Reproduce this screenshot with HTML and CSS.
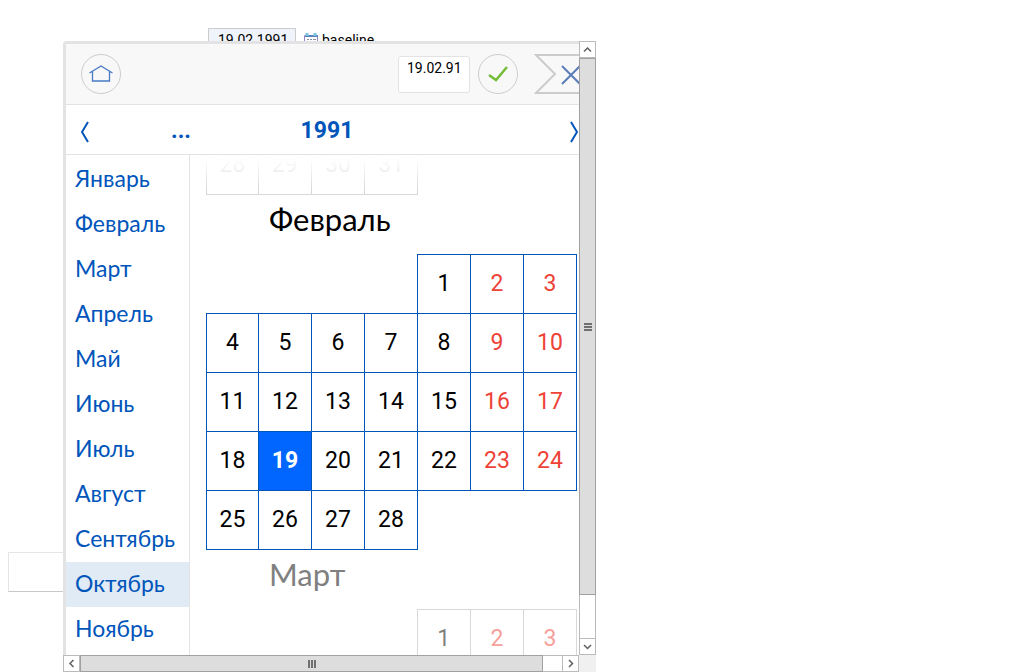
FILE: index.html
```html
<!DOCTYPE html>
<html lang="ru">
<head>
<meta charset="utf-8">
<title>Календарь</title>
<link rel="stylesheet" href="styles.css">
</head>
<body>
<main class="page">
  <div class="date-row">
    <input class="date-input" type="text" value="19.02.1991" aria-label="Дата" id="date">
    <svg class="date-icon" viewBox="0 0 14 14" aria-hidden="true"><path d="M.5 2.500h13v11H.5z" fill="#fff" stroke="#9a86cc"/><path d="M1 2h13v2H1z" fill="#5b83bd"/><path d="M3 0v3M11 0v3" stroke="#7cc4dd" stroke-width="3"/><path d="M3 6.500h2m1 0h2m1 0h3M3 9.500h2m1 0h2m1 0h3" stroke="#8b91a8"/></svg>
    <label for="date">baseline</label>
  </div>
  <input class="field" type="text" aria-label="Поле">
</main>

<div class="popup" role="dialog" aria-label="Выбор даты">
  <div class="picker">
    <header class="toolbar">
      <button class="round" type="button" aria-label="Сегодня"><svg width="24" height="18" viewBox="0 0 24 18"><path d="M.5 8 12 1l11.500 7M3.500 6.500v9.500h17V6.500" fill="none" stroke="#4779c4" stroke-width="1.300"/></svg></button>
      <input class="short-date" type="text" value="19.02.91" aria-label="Выбранная дата">
      <button class="round" type="button" aria-label="Применить"><svg width="20" height="16" viewBox="0 0 20 16"><path d="m1 9 7 5L19 1" fill="none" stroke="#75bd38" stroke-width="2.500"/></svg></button>
      <button class="close" type="button" aria-label="Закрыть"><svg width="45" height="40" viewBox="0 0 45 40"><path d="M46 1H2l19 19L2 39h44" fill="none" stroke="#ccc" stroke-width="2"/><path d="m28 12 18 18M28 30l18-18" stroke="#5c7eb8" stroke-width="2"/></svg></button>
    </header>
    <nav class="years" aria-label="Годы">
      <button class="arrow" type="button" aria-label="Назад"><svg width="10" height="22" viewBox="0 0 10 22"><path d="M8 1 2 11l6 10" fill="none" stroke="#0055bb" stroke-width="2"/></svg></button>
      <button class="year" type="button">...</button>
      <button class="year" type="button">1991</button>
      <button class="arrow next" type="button" aria-label="Вперёд"><svg width="10" height="22" viewBox="0 0 10 22"><path d="m2 1 6 10-6 10" fill="none" stroke="#0055bb" stroke-width="2"/></svg></button>
    </nav>
    <div class="content">
      <nav class="months" aria-label="Месяцы">
        <a href="#m1">Январь</a><a href="#m2">Февраль</a><a href="#m3">Март</a><a href="#m4">Апрель</a><a href="#m5">Май</a><a href="#m6">Июнь</a><a href="#m7">Июль</a><a href="#m8">Август</a><a href="#m9">Сентябрь</a><a href="#m10" class="hover">Октябрь</a><a href="#m11">Ноябрь</a>
      </nav>
      <div class="calendar">
        <table class="days previous" aria-label="Январь">
          <colgroup><col class="first"><col span="6"></colgroup>
          <tr><td>28</td><td>29</td><td>30</td><td>31</td><td class="empty"></td><td class="empty"></td><td class="empty"></td></tr>
        </table>
        <h2 class="month">Февраль</h2>
        <table class="days" aria-label="Февраль">
          <colgroup><col class="first"><col span="6"></colgroup>
          <tr><td class="empty"></td><td class="empty"></td><td class="empty"></td><td class="empty"></td><td>1</td><td class="off">2</td><td class="off">3</td></tr>
          <tr><td>4</td><td>5</td><td>6</td><td>7</td><td>8</td><td class="off">9</td><td class="off">10</td></tr>
          <tr><td>11</td><td>12</td><td>13</td><td>14</td><td>15</td><td class="off">16</td><td class="off">17</td></tr>
          <tr><td>18</td><td class="selected">19</td><td>20</td><td>21</td><td>22</td><td class="off">23</td><td class="off">24</td></tr>
          <tr><td>25</td><td>26</td><td>27</td><td>28</td><td class="empty"></td><td class="empty"></td><td class="empty"></td></tr>
        </table>
        <h2 class="month muted">Март</h2>
        <table class="days next-month" aria-label="Март">
          <colgroup><col class="first"><col span="6"></colgroup>
          <tr><td class="empty"></td><td class="empty"></td><td class="empty"></td><td class="empty"></td><td>1</td><td class="off">2</td><td class="off">3</td></tr>
        </table>
      </div>
    </div>
  </div>
  <div class="bar vertical">
    <button class="step" type="button" aria-label="Вверх"><svg width="9" height="9" viewBox="0 0 9 9"><path d="m1 6.500 3.500-3.500L8 6.500"/></svg></button>
    <div class="thumb"><span class="grip"></span></div>
    <div class="track"></div>
    <button class="step" type="button" aria-label="Вниз"><svg width="9" height="9" viewBox="0 0 9 9"><path d="m1 3 3.500 3.500L8 3"/></svg></button>
  </div>
  <div class="bar horizontal">
    <button class="step" type="button" aria-label="Влево"><svg width="9" height="9" viewBox="0 0 9 9"><path d="M6.500 1 3 4.500 6.500 8"/></svg></button>
    <div class="thumb"><span class="grip"></span></div>
    <div class="track"></div>
    <button class="step" type="button" aria-label="Вправо"><svg width="9" height="9" viewBox="0 0 9 9"><path d="m3 1 3.500 3.500L3 8"/></svg></button>
  </div>
</div>
</body>
</html>
```
FILE: styles.css
```css
* { box-sizing: border-box; }

body {
  margin: 0;
  height: 100vh;
  overflow: hidden;
  background: #fff;
  color: #000;
  font-family: Roboto, "Liberation Sans", sans-serif;
}

button {
  padding: 0;
  border: 0;
  background: none;
  color: inherit;
  font: inherit;
}

svg { display: block; flex: none; }

.page {
  display: flex;
  flex-direction: column;
  align-items: flex-start;
  gap: 500px;
  padding: 28px 8px;
}

.date-row {
  display: flex;
  align-items: center;
  height: 24px;
  margin-left: 200px;
  font-size: 14px;
}

.date-input {
  width: 88px;
  height: 24px;
  padding: 0 9px;
  border: 1px solid #ccc;
  background: #eff4fb;
  font: inherit;
}

.date-icon {
  width: 14px;
  height: 14px;
  margin: 0 4px 0 8px;
}

.field {
  width: 200px;
  height: 40px;
  border: 1px solid #e5e5e5;
  border-bottom-color: #c8c8c8;
}

.popup {
  position: absolute;
  top: 41px;
  bottom: 0;
  left: 63px;
  display: grid;
  grid-template-columns: minmax(0, 1fr) 17px;
  grid-template-rows: minmax(0, 1fr) 17px;
  width: min(533px, calc(100% - 71px));
  background: #f0f0f0;
  border-top-left-radius: 4px;
}

.picker {
  display: flex;
  flex-direction: column;
  overflow: hidden;
  border: solid #e3e3e3;
  border-width: 3px 0 0 3px;
  border-top-left-radius: 4px;
  background: #fff;
}

.toolbar {
  display: flex;
  flex: none;
  align-items: center;
  gap: 8px;
  height: 61px;
  padding-left: 15px;
  border-bottom: 1px solid #e3e3e3;
  background: #f8f8f8;
}

.round {
  display: flex;
  align-items: center;
  justify-content: center;
  width: 40px;
  height: 40px;
  border: 1px solid #ccc;
  border-radius: 50%;
}

.short-date {
  width: 72px;
  height: 37px;
  margin-left: auto;
  padding: 0 8px 12px;
  border: 1px solid #e3e3e3;
  border-radius: 3px;
  background: #fff;
  font: 14px/24px Roboto, "Liberation Sans", sans-serif;
}

.close { margin-left: 8px; }

.years {
  display: grid;
  flex: none;
  grid-template-columns: 42px 146px 146px 1fr;
  align-items: center;
  height: 50px;
  border-bottom: 1px solid #e3e3e3;
  color: #0055bb;
}

.arrow { padding: 4px 0 0 14px; }

.next {
  justify-self: end;
  padding-left: 0;
}

.year {
  padding-top: 2px;
  font-size: 23px;
  font-weight: 700;
  line-height: 46px;
}

.content {
  display: flex;
  flex: 1;
  min-height: 0;
}

.months {
  flex: none;
  width: 124px;
  padding-top: 2px;
  border-right: 1px solid #e3e3e3;
}

.months a {
  display: block;
  padding: 0 0 2px 9px;
  color: #0055bb;
  font: 23px/43px Lato, "Open Sans", sans-serif;
  text-decoration: none;
}

.months .hover { background: #e1ebf5; }

.calendar {
  flex: 1;
  overflow: hidden;
  padding: 0 2px 0 16px;
}

.days {
  width: 100%;
  table-layout: fixed;
  border-collapse: collapse;
  font-size: 23px;
}

.first { width: 52px; }

.days td {
  height: 59px;
  padding: 0 0 2px;
  border: 1px solid #0055bb;
  text-align: center;
}

.days .off { color: #ee4237; }

.days .selected {
  background: #0066ff;
  color: #fff;
  font-weight: 700;
}

.days .empty { border: 0; }

.previous {
  margin-top: -20px;
  color: #d5d5d5;
  -webkit-mask-image: linear-gradient(transparent 24px, #000 56px);
  mask-image: linear-gradient(transparent 24px, #000 56px);
}

.previous td:not(.empty),
.next-month td:not(.empty) { border-color: #d8d8d8; }

.next-month { color: #808080; }

.next-month .off { color: #f7a09b; }

.month {
  height: 59px;
  margin: 0;
  padding-left: 63px;
  font: 31px/48px Lato, "Open Sans", sans-serif;
}

.muted { color: #808080; }

.bar { display: flex; }

.vertical { flex-direction: column; }

.step {
  display: flex;
  flex: none;
  align-items: center;
  justify-content: center;
  width: 17px;
  height: 17px;
  border: 1px solid #bbb;
  background: #fff;
}

.step path {
  fill: none;
  stroke: #606060;
  stroke-width: 1.500;
}

.thumb {
  display: flex;
  align-items: center;
  justify-content: center;
  border: 1px solid #a1a1a1;
  background: #ddd;
}

.vertical .thumb { flex: 537; }
.horizontal .thumb { flex: 463; }

.track {
  border: solid #bbb;
  background: #fff;
}

.vertical .track {
  flex: 43;
  border-width: 0 1px;
}

.horizontal .track {
  flex: 19;
  border-width: 1px 0;
}

.grip {
  width: 8px;
  height: 8px;
}

.vertical .grip { background: repeating-linear-gradient(#707070 0 2px, #ddd 2px 3px); }
.horizontal .grip { background: repeating-linear-gradient(90deg, #707070 0 2px, #ddd 2px 3px); }
```
